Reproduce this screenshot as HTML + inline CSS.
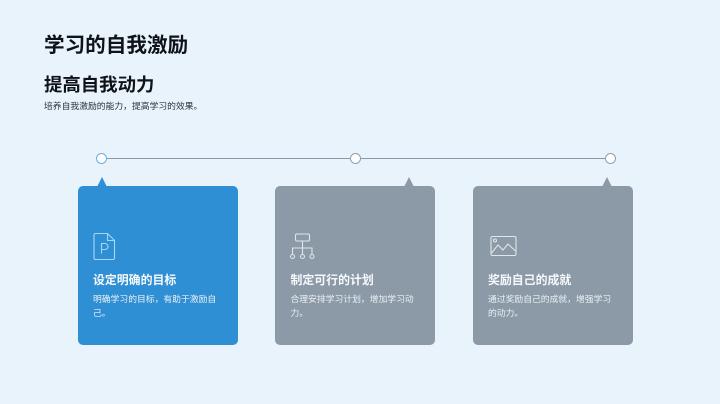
<!DOCTYPE html>
<html lang="zh">
<head>
<meta charset="utf-8">
<style>
html,body{margin:0;padding:0}
body{width:720px;height:404px;overflow:hidden;background:#e8f3fc;position:relative;font-family:"Liberation Sans","Noto Sans CJK SC",sans-serif;}
div{position:absolute;white-space:nowrap}
#w{left:0;top:0;width:720px;height:404px;filter:blur(.3px)}
.h1{left:44px;top:32px;font-size:20.600px;line-height:27px;font-weight:700;color:#0f1318}
.h2{left:44px;top:72px;font-size:18.400px;line-height:25px;font-weight:700;color:#0f1318}
.sub{left:44px;top:100px;font-size:8.800px;line-height:13px;color:#2e343a}
.line{left:101px;top:157.500px;width:509px;height:1.500px;background:#8b99a6}
.dot{width:9px;height:9px;top:153px;border-radius:50%;background:#fff;border:1px solid #8fa0ae}
.card{top:186px;width:160px;height:159px;border-radius:5px;background:#8c9aa8}
.tri{top:177px;width:0;height:0;border-left:5.500px solid transparent;border-right:5.500px solid transparent;border-bottom:10px solid #8c9aa8}
.t{top:272px;font-size:11.900px;line-height:17px;font-weight:700;color:#f6f9fc}
.d{top:292px;font-size:8.800px;line-height:14px;color:#eaf0f5}
svg{position:absolute;fill:none;stroke-width:1.100}
</style>
</head>
<body>
<div id="w">
<div class="h1">学习的自我激励</div>
<div class="h2">提高自我动力</div>
<div class="sub">培养自我激励的能力，提高学习的效果。</div>

<div class="line"></div>
<div class="dot" style="left:96px;border-color:#6aaee0"></div>
<div class="dot" style="left:350px"></div>
<div class="dot" style="left:605px"></div>

<div class="tri" style="left:97px;border-bottom-color:#2f8fd4"></div>
<div class="tri" style="left:404px"></div>
<div class="tri" style="left:601.500px"></div>

<div class="card" style="left:77.500px;background:#2f8fd4"></div>
<div class="card" style="left:275px"></div>
<div class="card" style="left:473px"></div>

<svg style="left:90px;top:230px;stroke:#a8d6f5" width="28" height="32" viewBox="0 0 28 32">
<path d="M5.500 3.500H17.500L24.500 10.500V28a1.500 1.500 0 0 1-1.500 1.500H5.500A1.500 1.500 0 0 1 4 28V5A1.500 1.500 0 0 1 5.500 3.500Z"/>
<path d="M17.500 3.500V10.500H24.500"/>
<path d="M11.500 23.500V13.500H15a3 3 0 0 1 0 6H11.500"/>
</svg>
<svg style="left:288px;top:231px;stroke:#dfe5ea" width="30" height="32" viewBox="0 0 30 32">
<rect x="7.500" y="3" width="14" height="7" rx="1.500"/>
<path d="M14.500 10V23.500M4.500 23.500V17H24V23.500"/>
<circle cx="4.500" cy="25.500" r="2"/>
<circle cx="14.500" cy="25.500" r="2"/>
<circle cx="24" cy="25.500" r="2"/>
</svg>
<svg style="left:488px;top:233px;stroke:#dfe5ea" width="30" height="28" viewBox="0 0 30 28">
<rect x="3" y="3.500" width="25" height="19" rx="1.500"/>
<circle cx="7" cy="7.500" r="1.500"/>
<path d="M3.500 20L10 12L15 17L20 11L27.500 18"/>
</svg>

<div class="t" style="left:93px">设定明确的目标</div>
<div class="d" style="left:93px">明确学习的目标，有助于激励自<br>己。</div>

<div class="t" style="left:290.500px">制定可行的计划</div>
<div class="d" style="left:290.500px">合理安排学习计划，增加学习动<br>力。</div>

<div class="t" style="left:488px">奖励自己的成就</div>
<div class="d" style="left:488px">通过奖励自己的成就，增强学习<br>的动力。</div>
</div>
</body>
</html>
